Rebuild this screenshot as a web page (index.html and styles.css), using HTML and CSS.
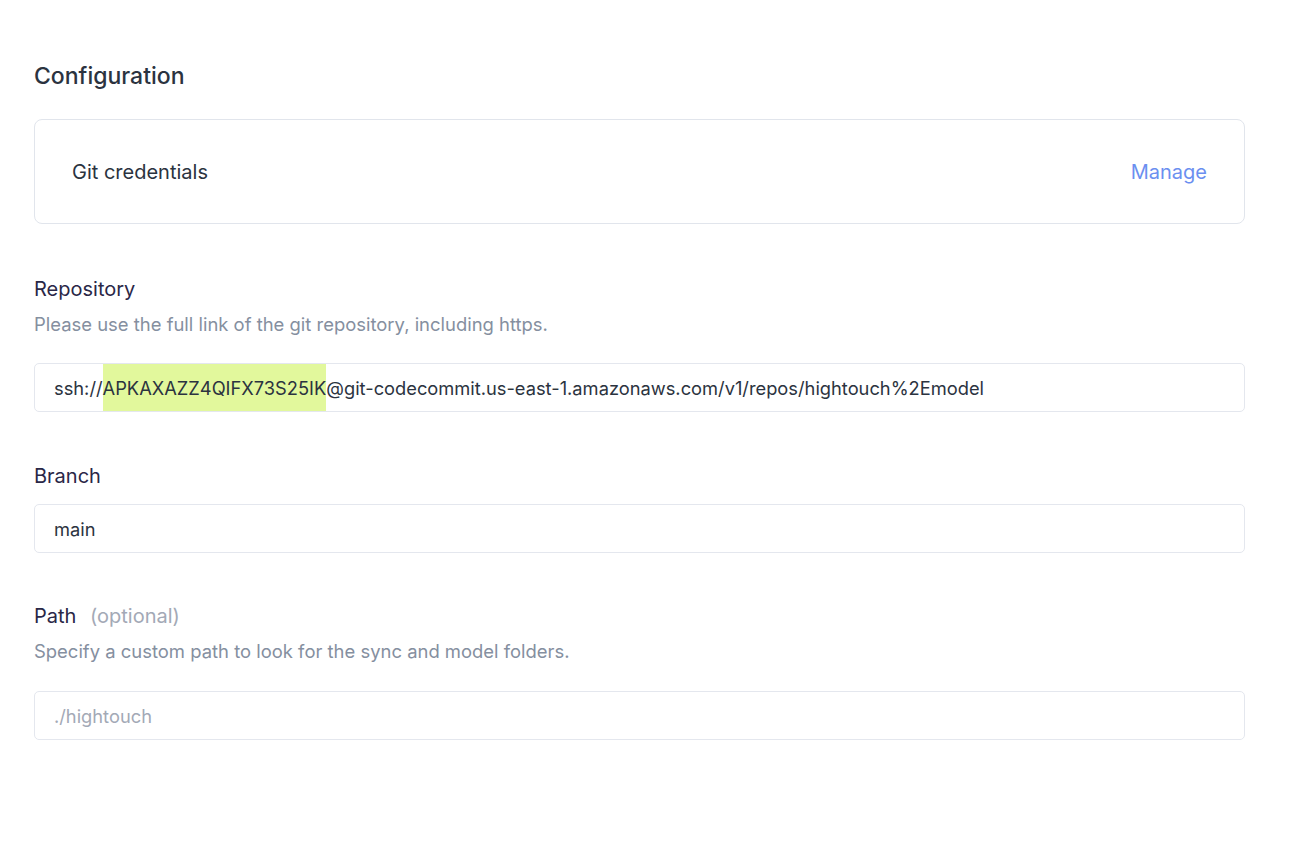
FILE: index.html
```html
<!DOCTYPE html>
<html>
<head>
<meta charset="utf-8">
<link rel="stylesheet" href="styles.css">
</head>
<body>
<main class="page">
  <h2 class="title">Configuration</h2>
  <div class="card">
    <span class="card-label">Git credentials</span>
    <a class="card-link" href="#">Manage</a>
  </div>

  <section class="field field-repo">
    <div class="label">Repository</div>
    <div class="help">Please use the full link of the git repository, including https.</div>
    <div class="input"><span>ssh://</span><mark class="hl">APKAXAZZ4QIFX73S25IK</mark><span>@git-codecommit.us-east-1.amazonaws.com/v1/repos/hightouch%2Emodel</span></div>
  </section>

  <section class="field field-branch">
    <div class="label">Branch</div>
    <div class="input">main</div>
  </section>

  <section class="field field-path">
    <div class="label">Path <span class="optional">(optional)</span></div>
    <div class="help">Specify a custom path to look for the sync and model folders.</div>
    <div class="input placeholder">./hightouch</div>
  </section>
</main>
</body>
</html>
```

FILE: styles.css
```css
* { box-sizing: border-box; }
html, body { margin: 0; padding: 0; background: #fff; }
body {
  font-family: Inter, "Noto Sans", sans-serif;
  color: #2d3340;
}
.page {
  width: 1211px;
  margin-left: 34px;
  padding-top: 61px;
}
.title {
  margin: 0;
  font-size: 23px;
  font-weight: 500;
  line-height: 30px;
  color: #2b3340;
}
.card {
  margin-top: 28px;
  height: 105px;
  border: 1px solid #e1e5ec;
  border-radius: 8px;
  display: flex;
  align-items: center;
  justify-content: space-between;
  padding: 0 37px 0 37px;
}
.card-label {
  font-size: 20px;
  color: #2b3340;
}
.card-link {
  font-size: 20px;
  color: #6b8ff0;
  text-decoration: none;
}
.field { display: flex; flex-direction: column; }
.field-repo { margin-top: 51px; }
.field-branch { margin-top: 50px; }
.field-path { margin-top: 49px; }
.label {
  font-size: 20px;
  line-height: 28px;
  color: #2a2747;
}
.optional {
  color: #a3a9b6;
  margin-left: 8px;
}
.help {
  margin-top: 8px;
  font-size: 18.45px;
  line-height: 26px;
  color: #858fa0;
}
.input {
  margin-top: 26px;
  height: 49px;
  border: 1px solid #e4e7ee;
  border-radius: 5px;
  padding: 0 19px;
  display: flex;
  align-items: stretch;
  font-size: 18.3px;
  color: #2b3340;
  white-space: nowrap;
}
.input > span, .input > mark { display: flex; align-items: center; }
.field-branch .input, .field-path .input { align-items: center; }
.field-branch .input { margin-top: 14px; }
.field-path .input { margin-top: 27px; }
.hl {
  background: #e2f89c;
  color: #2b3340;
}
.placeholder { color: #a3a9b6; }
```
